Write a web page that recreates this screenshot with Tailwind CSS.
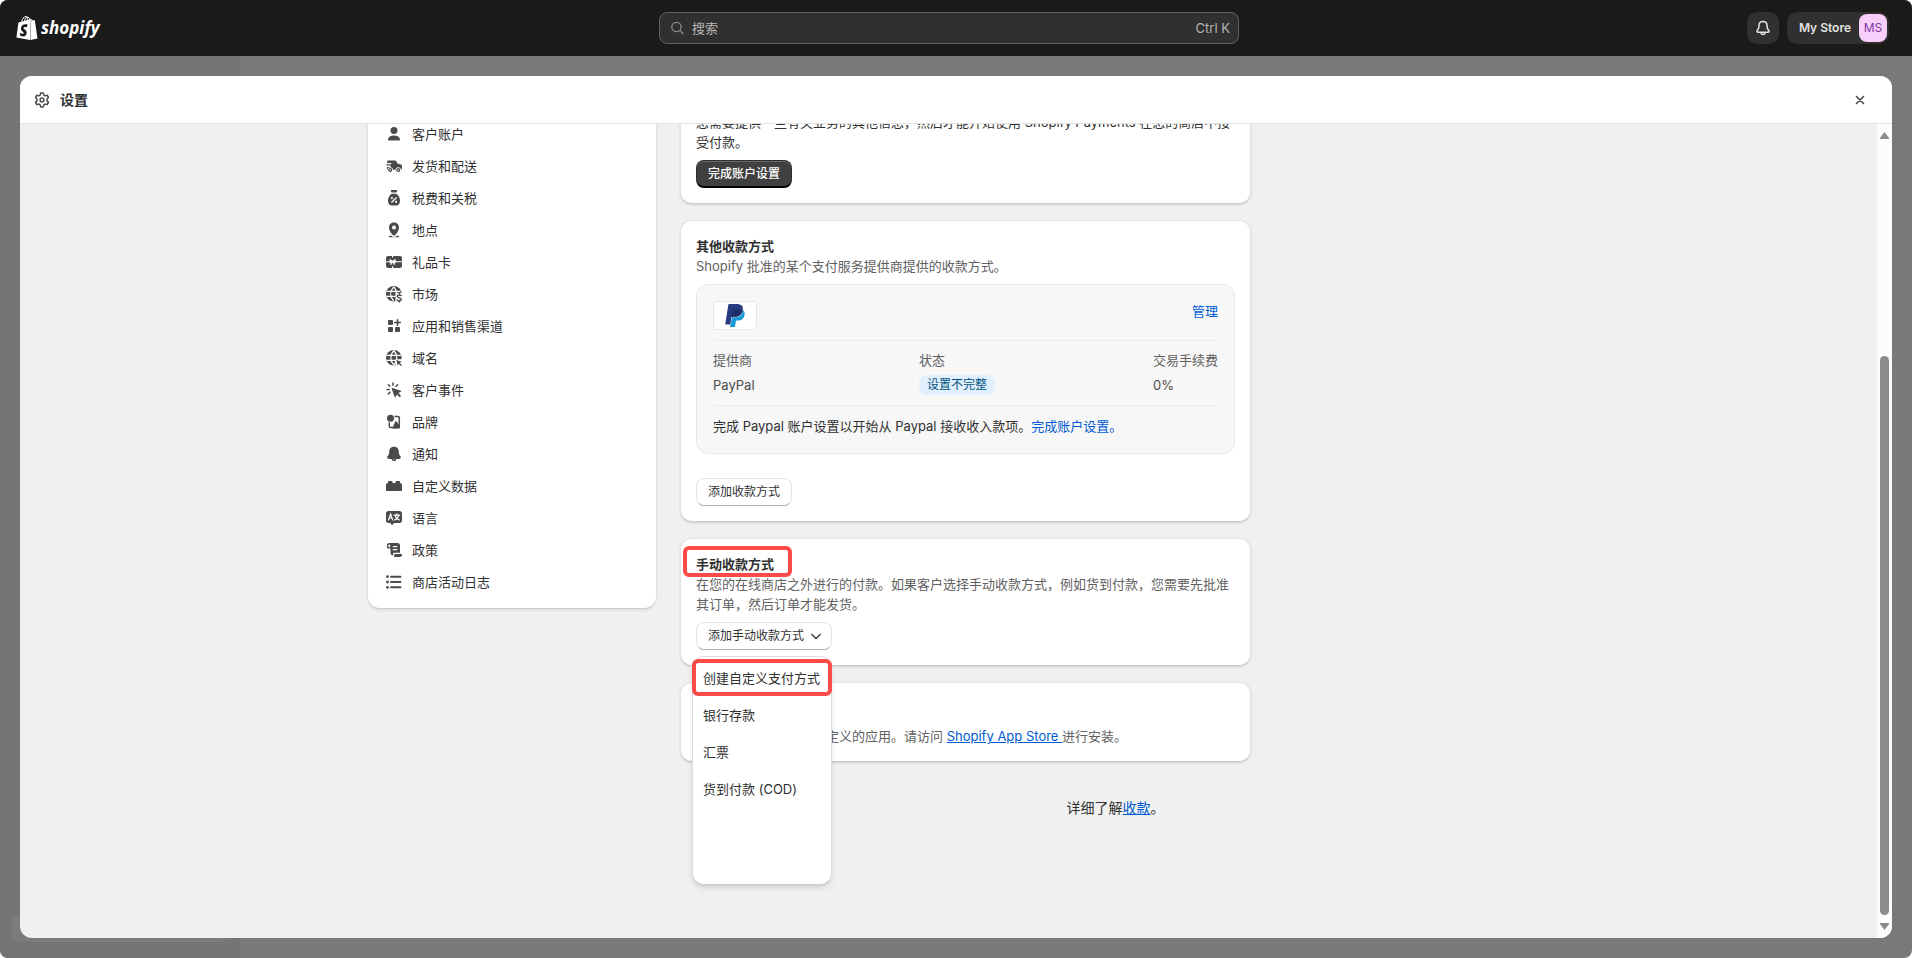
<!DOCTYPE html>
<html lang="zh-CN">
<head>
<meta charset="utf-8">
<title>设置 · 收款</title>
<script src="https://cdn.jsdelivr.net/npm/@tailwindcss/browser@4"></script>
</head>
<body class="bg-white font-['Inter','Noto_Sans_CJK_SC',sans-serif] text-[13px] leading-5 text-[#303030]">
<div class="relative flex h-screen flex-col overflow-hidden rounded-lg bg-[#797979]">
  <div class="absolute inset-y-0 left-0 w-60 bg-[#757575]"></div>
  <div class="absolute bottom-4 left-3 h-7 w-[216px] rounded-lg bg-[#7c7c7c]"></div>

  <header class="relative grid h-14 shrink-0 grid-cols-[1fr_580px_1fr] items-center bg-[#1a1a1a] pr-[23px] pl-[9px]">
    <a href="#" aria-label="Shopify" class="ml-[7px] flex items-center gap-[3px] text-white">
      <svg class="h-6 w-[22px]" viewBox="1 0 22 24" fill="currentColor" aria-hidden="true"><path d="M15.337 23.979l7.216-1.561s-2.604-17.613-2.625-17.73c-.018-.116-.114-.192-.211-.192s-1.929-.136-1.929-.136-1.275-1.274-1.439-1.411c-.045-.037-.075-.057-.121-.074l-.914 21.104h.023zM11.71 11.305s-.81-.424-1.774-.424c-1.447 0-1.504.906-1.504 1.141 0 1.232 3.24 1.715 3.24 4.629 0 2.295-1.44 3.76-3.406 3.76-2.354 0-3.54-1.465-3.54-1.465l.646-2.086s1.245 1.066 2.28 1.066c.675 0 .975-.545.975-.932 0-1.619-2.654-1.694-2.654-4.359-.034-2.237 1.571-4.416 4.827-4.416 1.257 0 1.875.361 1.875.361l-.945 2.715-.02.01zM11.17.83c.136 0 .271.038.405.135-.984.465-2.064 1.639-2.508 3.992-.656.213-1.293.405-1.889.578C7.697 3.75 8.951.84 11.17.84V.83zm1.235 2.949v.135c-.754.232-1.583.484-2.394.736.466-1.777 1.333-2.645 2.085-2.971.193.501.309 1.176.309 2.1zm.539-2.234c.694.074 1.141.867 1.429 1.755-.349.114-.735.231-1.158.366v-.252c0-.752-.096-1.371-.271-1.871v.002zm2.992 1.289c-.02 0-.06.021-.078.021s-.289.075-.714.21c-.423-1.233-1.176-2.37-2.508-2.37h-.115C12.135.209 11.669 0 11.265 0 8.159 0 6.675 3.877 6.21 5.846c-1.194.365-2.063.636-2.16.674-.675.213-.694.232-.772.87-.075.462-1.83 14.063-1.83 14.063l13.5 2.531.988-21.15z"/></svg>
      <span class="font-['Open_Sans','Noto_Sans',sans-serif] text-[17px] leading-6 font-bold italic">shopify</span>
    </a>
    <label class="flex h-8 items-center gap-2 rounded-lg border border-[#616161] bg-[#303030] px-2 text-[#b5b5b5]">
      <svg class="ml-[2px] size-[14px] text-[#8a8a8a]" viewBox="0 0 14 14" fill="none" stroke="currentColor" stroke-width="1.3" stroke-linecap="round" aria-hidden="true"><circle cx="6.500" cy="6" r="4.7"/><path d="M10.100 9.600 13 12.800"/></svg>
      <input type="text" aria-label="搜索" placeholder="搜索" class="min-w-0 flex-1 bg-transparent outline-none placeholder:text-[#b5b5b5]">
      <kbd class="font-['Inter',sans-serif] text-[13px]">Ctrl K</kbd>
    </label>
    <div class="flex items-center justify-end gap-2">
      <button type="button" aria-label="通知" class="flex size-8 items-center justify-center rounded-[10px] bg-[#303030] text-[#e3e3e3]">
        <svg class="size-5" viewBox="0 0 20 20" fill="none" stroke="currentColor" stroke-width="1.5" stroke-linejoin="round" aria-hidden="true"><path d="M10 3.5c-2.300 0-4 1.700-4 4 0 2.600-.5 3.600-1.600 4.700-.9.900-.5 2.100.7 2.100h9.800c1.200 0 1.600-1.200.7-2.100-1.100-1.100-1.600-2.100-1.600-4.700 0-2.300-1.700-4-4-4Z"/><path d="M8 14.500c0 1.200.8 2 2 2s2-.8 2-2"/></svg>
      </button>
      <button type="button" class="flex h-8 items-center gap-2 rounded-[10px] bg-[#303030] pr-[2px] pl-3 text-xs font-semibold text-[#e3e3e3]">
        My Store
        <span class="flex size-7 items-center justify-center rounded-lg bg-[#f8cffb] font-normal text-[#7e3a9e]">MS</span>
      </button>
    </div>
  </header>

  <section class="relative m-5 flex min-h-0 flex-1 flex-col overflow-hidden rounded-xl bg-[#f0f0f0]" role="dialog" aria-labelledby="settings-title">
    <div class="flex h-12 shrink-0 items-center border-b border-[#e3e3e3] bg-white pr-[22px] pl-3">
      <svg class="size-5 text-[#4a4a4a]" viewBox="0 0 20 20" fill="none" stroke="currentColor" stroke-width="1.5" stroke-linejoin="round" aria-hidden="true"><path d="M8.700 3h2.600l.5 2.100 1.300.75 2.100-.6 1.300 2.250-1.500 1.500v1.900l1.500 1.500-1.300 2.250-2.100-.6-1.300.75-.5 2.100H8.700l-.5-2.100-1.300-.75-2.100.6-1.300-2.250 1.500-1.500V9L3.500 7.500l1.300-2.250 2.100.6 1.300-.75Z"/><circle cx="10" cy="10" r="1.900"/></svg>
      <h1 id="settings-title" class="ml-2 text-sm font-semibold">设置</h1>
      <button type="button" aria-label="关闭" class="ml-auto flex size-5 items-center justify-center text-[#4a4a4a]">
        <svg class="size-5" viewBox="0 0 20 20" fill="none" stroke="currentColor" stroke-width="1.6" stroke-linecap="round" aria-hidden="true"><path d="m6.500 6.500 7 7M13.500 6.500l-7 7"/></svg>
      </button>
    </div>

    <div class="flex min-h-0 flex-1">
      <div class="min-w-0 flex-1 overflow-hidden">
        <div class="mx-auto -mt-9 flex max-w-[1161px] items-start gap-6">
          <nav aria-label="设置" class="w-72 shrink-0 rounded-xl border-b border-[#cccccc] bg-white px-2 pt-8 pb-3 shadow-sm ring-1 ring-[#e3e3e3]">
            <ul class="flex flex-col gap-1">
              <li><a href="#" class="flex h-7 items-center gap-2 px-2">
                <svg class="size-5 text-[#4a4a4a]" viewBox="0 0 20 20" fill="currentColor" aria-hidden="true"><circle cx="10" cy="6.500" r="3.500"/><path d="M4 15.200C4.300 13 6.500 11.500 10 11.500s5.700 1.500 6 3.700c.1.700-.4 1.300-1.100 1.300H5.100c-.7 0-1.200-.6-1.100-1.300Z"/></svg>客户账户</a></li>
              <li><a href="#" class="flex h-7 items-center gap-2 px-2">
                <svg class="size-5 text-[#4a4a4a]" viewBox="0 0 20 20" fill="currentColor" aria-hidden="true"><path d="M3.700 4.500h6.800c1 0 1.700.4 2.100 1.300l.8 1.700 2.900.8c1.100.3 1.700 1 1.700 2.100v1.700c0 1-.5 1.700-1.500 1.700H4.300C3.300 13.800 2.900 13.200 2.900 12.300v-1.400h3.600V9.600H2.900c-.8 0-.8-1.300 0-1.300h4.400V7H3.700c-.9 0-1-2.500 0-2.500Z"/><circle cx="6.200" cy="14" r="2.700" fill="#fff"/><circle cx="14.300" cy="14" r="2.700" fill="#fff"/><circle cx="6.200" cy="14" r="1.400" fill="#fff" stroke="currentColor" stroke-width="1.300"/><circle cx="14.300" cy="14" r="1.400" fill="#fff" stroke="currentColor" stroke-width="1.300"/></svg>发货和配送</a></li>
              <li><a href="#" class="flex h-7 items-center gap-2 px-2">
                <svg class="size-5 text-[#4a4a4a]" viewBox="0 0 20 20" fill="currentColor" aria-hidden="true"><path d="M7.300 2h5.400c.5 0 .8.5.5.9L12.200 4.600H7.800L6.800 2.900c-.3-.4 0-.9.500-.9ZM7.600 5.700h4.800c2 1.500 3.600 4.100 3.600 6.800 0 3.300-1.500 5-4 5H8c-2.500 0-4-1.700-4-5 0-2.700 1.600-5.300 3.600-6.800Z"/><path d="m7.500 14.500 5-5" stroke="#fff" stroke-width="1.300"/><circle cx="7.900" cy="10.100" r="1.050" fill="#fff"/><circle cx="12.100" cy="13.900" r="1.050" fill="#fff"/></svg>税费和关税</a></li>
              <li><a href="#" class="flex h-7 items-center gap-2 px-2">
                <svg class="size-5 text-[#4a4a4a]" viewBox="0 0 20 20" fill="currentColor" aria-hidden="true"><path fill-rule="evenodd" d="M10 2.500c-2.900 0-5 2.100-5 4.900 0 3.300 2.300 6 3.800 7.600.7.700 1.700.7 2.400 0C12.700 13.400 15 10.700 15 7.400c0-2.800-2.100-4.900-5-4.900Zm0 3a2 2 0 1 1 0 4 2 2 0 0 1 0-4Z"/><path d="M5.500 15.800h1.800c.7.900 1.700 1.200 2.700 1.200s2-.3 2.700-1.200h1.800c.8 0 .8 1.500 0 1.500h-9c-.8 0-.8-1.500 0-1.500Z"/></svg>地点</a></li>
              <li><a href="#" class="flex h-7 items-center gap-2 px-2">
                <svg class="size-5 text-[#4a4a4a]" viewBox="0 0 20 20" fill="currentColor" aria-hidden="true"><rect x="2" y="4" width="16" height="12" rx="2.200"/><path d="M2 9.800h3.500M11.500 9.800H18" stroke="#fff" stroke-width="1.100"/><path d="M8.600 4v1.500M8.600 14.300V16" stroke="#fff" stroke-width="1.200"/><path d="M8.600 9.500 6 7.800v3ZM8.600 9.500l2.600-1.700v3ZM8.600 9.500l-1.700 2.900M8.600 9.500l1.700 2.900" fill="#fff" stroke="#fff" stroke-width="1.100" stroke-linejoin="round" stroke-linecap="round"/></svg>礼品卡</a></li>
              <li><a href="#" class="flex h-7 items-center gap-2 px-2">
                <svg class="size-5 text-[#4a4a4a]" viewBox="0 0 20 20" fill="currentColor" aria-hidden="true"><circle cx="9.800" cy="9.800" r="7.800"/><path d="M2.500 7.300h14M2.500 12.300h9M9.700 2.800c-4 4.400-4 9.800 0 14.200M9.900 2.800c1.800 2 2.600 4.400 2.600 7" fill="none" stroke="#fff" stroke-width="1.200"/><path d="M11.500 9h8v11h-8Z" fill="#fff"/><path d="M17.200 11.700c-.5-.8-3.900-1.200-3.900.7s4 1.100 4 3-3.500 1.700-4.200.5M15.300 9.800v1.300M15.300 16.500v1.500" fill="none" stroke="currentColor" stroke-width="1.400" stroke-linecap="round"/></svg>市场</a></li>
              <li><a href="#" class="flex h-7 items-center gap-2 px-2">
                <svg class="size-5 text-[#4a4a4a]" viewBox="0 0 20 20" fill="currentColor" aria-hidden="true"><rect x="4" y="4" width="5" height="5" rx="1"/><rect x="4" y="11" width="5" height="5" rx="1"/><rect x="11" y="11" width="5" height="5" rx="1"/><path d="M13.500 3.700v5.600M10.700 6.500h5.600" stroke="currentColor" stroke-width="1.600" stroke-linecap="round"/></svg>应用和销售渠道</a></li>
              <li><a href="#" class="flex h-7 items-center gap-2 px-2">
                <svg class="size-5 text-[#4a4a4a]" viewBox="0 0 20 20" fill="currentColor" aria-hidden="true"><circle cx="9.800" cy="9.800" r="7.800"/><path d="M2.500 7.300h14.600M2.500 12.300h14M9.800 2.500c-4 4.400-4 10.200 0 14.600M9.800 2.500c4 4.400 4 10.200 0 14.600" fill="none" stroke="#fff" stroke-width="1.200"/><path d="M11.500 11.300h8v8h-8Z" fill="#fff"/><path d="m12.300 12.100 5.400 1.700-2 1.100 2.200 2.200-.9.900-2.200-2.200-1 2Z"/></svg>域名</a></li>
              <li><a href="#" class="flex h-7 items-center gap-2 px-2">
                <svg class="size-5 text-[#4a4a4a]" viewBox="0 0 20 20" fill="currentColor" aria-hidden="true"><path d="m8.500 7.900 8.400 2.800c.5.200.5.700.1.900l-2.500 1.500 2.600 2.800-1.400 1.300-2.700-2.600-1.500 2.300c-.3.400-.8.300-.9-.1L7.700 8.800c-.2-.6.200-1 .8-.9Z"/><path d="M9 3v2.200M4.300 4.800l1.600 1.500M13.700 4.800l-1.600 1.500M3 9.400h2.200M4.300 14l1.600-1.600" fill="none" stroke="currentColor" stroke-width="1.500" stroke-linecap="round"/></svg>客户事件</a></li>
              <li><a href="#" class="flex h-7 items-center gap-2 px-2">
                <svg class="size-5 text-[#4a4a4a]" viewBox="0 0 20 20" fill="currentColor" aria-hidden="true"><circle cx="6.500" cy="6.300" r="3.500"/><path d="M10.500 4.500h3.500c.8 0 1.300.5 1.300 1.300v8.400c0 .8-.5 1.300-1.300 1.300H6.600c-.8 0-1.300-.5-1.300-1.300v-4" fill="none" stroke="currentColor" stroke-width="1.500"/><path d="m11.300 9.600c.4-.6 1-.6 1.400 0l3.300 4.600v1c0 .8-.5 1.300-1.300 1.300H8.200Z"/></svg>品牌</a></li>
              <li><a href="#" class="flex h-7 items-center gap-2 px-2">
                <svg class="size-5 text-[#4a4a4a]" viewBox="0 0 20 20" fill="currentColor" aria-hidden="true"><path d="M10 2.700c-2.900 0-4.800 2-4.800 4.700 0 2.500-.4 3.400-1.600 4.700-1 1.100-.4 2.800 1 2.800h10.800c1.400 0 2-1.700 1-2.800-1.200-1.300-1.600-2.200-1.600-4.700 0-2.700-1.900-4.700-4.800-4.700Z"/><path d="M8.300 14.500c0 1.200.7 1.900 1.700 1.900s1.700-.7 1.700-1.900" fill="none" stroke="currentColor" stroke-width="1.400"/></svg>通知</a></li>
              <li><a href="#" class="flex h-7 items-center gap-2 px-2">
                <svg class="size-5 text-[#4a4a4a]" viewBox="0 0 20 20" fill="currentColor" aria-hidden="true"><path d="M4 7V6c0-.6.4-1 1-1h2.500c.6 0 1 .4 1 1v1h3V6c0-.6.4-1 1-1H15c.6 0 1 .4 1 1v1c1.200 0 2 .8 2 2v5c0 .6-.4 1-1 1H3c-.6 0-1-.4-1-1V9c0-1.200.8-2 2-2Z"/></svg>自定义数据</a></li>
              <li><a href="#" class="flex h-7 items-center gap-2 px-2">
                <svg class="size-5 text-[#4a4a4a]" viewBox="0 0 20 20" fill="currentColor" aria-hidden="true"><path d="M4.500 3h11C17 3 18 4 18 5.500v7c0 1.500-1 2.500-2.500 2.500h-5.300L8 17.300 6.300 15H4.500C3 15 2 14 2 12.500v-7C2 4 3 3 4.500 3Z"/><path d="m4.500 12 2.100-6 2.100 6M5.300 10h2.700M10 7.200h5.700M12.800 5.800v1.400M14.500 7.500c-.3 2-1.800 3.700-4 4.500M11.200 7.500c.4 2 1.900 3.700 4.300 4.500" fill="none" stroke="#fff" stroke-width="1.200" stroke-linecap="round"/></svg>语言</a></li>
              <li><a href="#" class="flex h-7 items-center gap-2 px-2">
                <svg class="size-5 text-[#4a4a4a]" viewBox="0 0 20 20" fill="currentColor" aria-hidden="true"><path d="M5 3h8.500C15 3 16 4 16 5.500v7.300H10c-.6 0-.9.300-.9.900V15.500C7.300 15.300 6.500 14.300 6.500 12.800V8.500H4.300C3.500 8.500 3 8 3 7.200V5c0-1.200.8-2 2-2Z"/><path d="M4.400 5.200c0-1 1.700-1 1.700 0v2H4.400Z" fill="#fff"/><path d="M8.800 6.700h4.500M8.800 9.700h4.500" stroke="#fff" stroke-width="1.300"/><path d="M10.300 14h7.200c.4 0 .6.200.6.600 0 1.400-.9 2.400-2.300 2.400H9.500c1-.6.800-1.500.8-3Z"/></svg>政策</a></li>
              <li><a href="#" class="flex h-7 items-center gap-2 px-2">
                <svg class="size-5 text-[#4a4a4a]" viewBox="0 0 20 20" fill="currentColor" aria-hidden="true"><circle cx="3.500" cy="4.700" r="1.400"/><circle cx="3.500" cy="10" r="1.400"/><circle cx="3.500" cy="15.300" r="1.400"/><path d="M7 4.700h9.500M7 10h9.500M7 15.300h9.500" stroke="currentColor" stroke-width="1.900" stroke-linecap="round"/></svg>商店活动日志</a></li>
            </ul>
          </nav>

          <main class="min-w-0 flex-1">
            <div class="flex max-w-[571px] flex-col gap-4">
              <section class="rounded-xl border border-[#e3e3e3] border-b-[#cccccc] bg-white px-[15px] pt-[23px] pb-[15px] shadow-sm">
                <p>您需要提供一些有关业务的其他信息，然后才能开始使用 Shopify Payments 在您的商店中接受付款。</p>
                <button type="button" class="mt-2 flex h-7 items-center rounded-lg border border-[#303030] border-b-2 border-b-black bg-[#404040] px-[11px] text-xs font-medium text-white inset-shadow-[0_1px_0_#6a6a6a]">完成账户设置</button>
              </section>

              <section class="rounded-xl border border-[#e3e3e3] border-b-[#cccccc] bg-white p-[15px] shadow-sm">
                <h2 class="font-semibold">其他收款方式</h2>
                <p class="text-[#616161]">Shopify 批准的某个支付服务提供商提供的收款方式。</p>
                <div class="mt-2 rounded-xl border border-[#e8e8e8] bg-[#f7f7f7] px-4 pt-4 pb-[17px]">
                  <div class="flex items-start justify-between border-b border-[#ebebeb] pb-[10px]">
                    <span class="flex h-[29px] w-11 items-center justify-center rounded-[3px] border border-[#e8e8e8] bg-white">
                      <svg class="h-[23px] w-5" viewBox="1.500 0 21 24" role="img" aria-label="PayPal"><path fill="#179bd7" d="M21.222 6.917a3.350 3.350 0 0 0-.607-.541c-.013.076-.026.175-.041.254-.93 4.778-4.005 7.201-9.138 7.201h-2.190a.563.563 0 0 0-.556.479l-1.187 7.527h-.506l-.24 1.516a.56.56 0 0 0 .554.647h3.882c.46 0 .85-.334.922-.788.06-.26.76-4.852.816-5.090a.932.932 0 0 1 .923-.788h.58c3.760 0 6.705-1.528 7.565-5.946.36-1.847.174-3.388-.777-4.471z"/><path fill="#253b80" d="M7.076 21.337H2.470a.641.641 0 0 1-.633-.74L4.944.901C5.026.382 5.474 0 5.998 0h7.460c2.570 0 4.578.543 5.690 1.810 1.010 1.150 1.304 2.420 1.012 4.287-.023.143-.047.288-.077.437-.983 5.050-4.349 6.797-8.647 6.797h-2.190c-.524 0-.968.382-1.050.9l-1.120 7.106z"/><path fill="#222d65" d="M9.300 6.800c.1-.6.500-.9 1.100-.9h5.800c1.500 0 2.800.1 3.960.5-.98 5.100-4.349 6.931-8.724 6.931h-2.190c-.524 0-.968.382-1.050.9Z"/></svg>
                    </span>
                    <a href="#" class="text-[#005bd3]">管理</a>
                  </div>
                  <table class="w-full table-fixed text-left">
                    <thead>
                      <tr class="text-[#616161]"><th class="h-[29px] w-[206px] pt-1 align-bottom font-normal">提供商</th><th class="pt-1 align-bottom font-normal">状态</th><th class="w-[65px] pt-1 align-bottom font-normal">交易手续费</th></tr>
                    </thead>
                    <tbody>
                      <tr class="text-[#4a4a4a]"><td class="h-[35px] pt-[5px] pb-[10px]">PayPal</td><td class="pt-[5px] pb-[10px]"><span class="flex h-5 w-fit items-center rounded-lg bg-[#e0f0ff] px-2 text-xs text-[#00527c]">设置不完整</span></td><td class="pt-[5px] pb-[10px]">0%</td></tr>
                    </tbody>
                  </table>
                  <p class="border-t border-[#ebebeb] pt-[10px]">完成 Paypal 账户设置以开始从 Paypal 接收收入款项。<a href="#" class="text-[#005bd3]">完成账户设置。</a></p>
                </div>
                <button type="button" class="mt-6 flex h-7 items-center rounded-lg border border-[#e3e3e3] border-b-[#b5b5b5] bg-white px-[11px] text-xs">添加收款方式</button>
              </section>

              <section class="relative z-10 rounded-xl border border-[#e3e3e3] border-b-[#cccccc] bg-white p-[15px] shadow-sm">
                <h2 class="relative w-fit font-semibold">手动收款方式<span class="absolute -top-2 -right-[18px] -bottom-[3px] -left-[13px] rounded-md border-4 border-[#fa4b48]"></span></h2>
                <p class="text-[#616161]">在您的在线商店之外进行的付款。如果客户选择手动收款方式，例如货到付款，您需要先批准其订单，然后订单才能发货。</p>
                <div class="relative mt-2 w-fit">
                  <button type="button" aria-expanded="true" aria-controls="manual-methods" class="flex h-7 items-center gap-[2px] rounded-lg border border-[#e3e3e3] border-b-[#b5b5b5] bg-white pr-[5px] pl-[11px] text-xs">添加手动收款方式
                    <svg class="size-5 text-[#4a4a4a]" viewBox="0 0 20 20" fill="none" stroke="currentColor" stroke-width="1.700" stroke-linecap="round" stroke-linejoin="round" aria-hidden="true"><path d="m5.800 8.500 4.200 4 4.200-4"/></svg>
                  </button>
                  <ul id="manual-methods" class="absolute top-[34px] -left-1 h-[229px] w-[140px] rounded-xl border border-[#dcdcdc] border-b-[#cccccc] bg-white pt-[2px] shadow-md">
                    <li class="relative"><a href="#" class="flex h-[37px] items-center px-[10px] whitespace-nowrap">创建自定义支付方式</a><span class="pointer-events-none absolute inset-y-0 -inset-x-px rounded-md border-4 border-[#fa4b48]"></span></li>
                    <li><a href="#" class="flex h-[37px] items-center px-[10px]">银行存款</a></li>
                    <li><a href="#" class="flex h-[37px] items-center px-[10px]">汇票</a></li>
                    <li><a href="#" class="flex h-[37px] items-center px-[10px]">货到付款 (COD)</a></li>
                  </ul>
                </div>
              </section>

              <section class="rounded-xl border border-[#e3e3e3] border-b-[#cccccc] bg-white p-[15px] shadow-sm">
                <h2 class="font-semibold">付款自定义</h2>
                <p class="mt-2 text-[#616161]">您目前没有安装任何自定义的应用。请访问 <a href="#" class="text-[#005bd3] underline">Shopify App Store </a>进行安装。</p>
              </section>
            </div>
            <p class="mt-9 pl-[22px] text-center text-sm leading-5">详细了解<a href="#" class="text-[#005bd3] underline">收款</a>。</p>
          </main>
        </div>
      </div>

      <div class="flex w-[15px] shrink-0 flex-col items-center bg-[#fcfcfc] py-2" aria-hidden="true">
        <svg class="h-[7px] w-[9px] shrink-0" viewBox="0 0 9 7" fill="#8b8b8b"><path d="M4.500 0 9 6c.2.500 0 1-.6 1H.6C0 7-.2 6.500 0 6Z"/></svg>
        <div class="grow-[217] basis-0"></div>
        <div class="mb-2 w-[9px] grow-[558] basis-0 rounded-full bg-[#8b8b8b]"></div>
        <svg class="h-[7px] w-[9px] shrink-0" viewBox="0 0 9 7" fill="#8b8b8b"><path d="M4.500 7 9 1c.2-.5 0-1-.6-1H.6C0 0-.2.500 0 1Z"/></svg>
      </div>
    </div>
  </section>
</div>
</body>
</html>
